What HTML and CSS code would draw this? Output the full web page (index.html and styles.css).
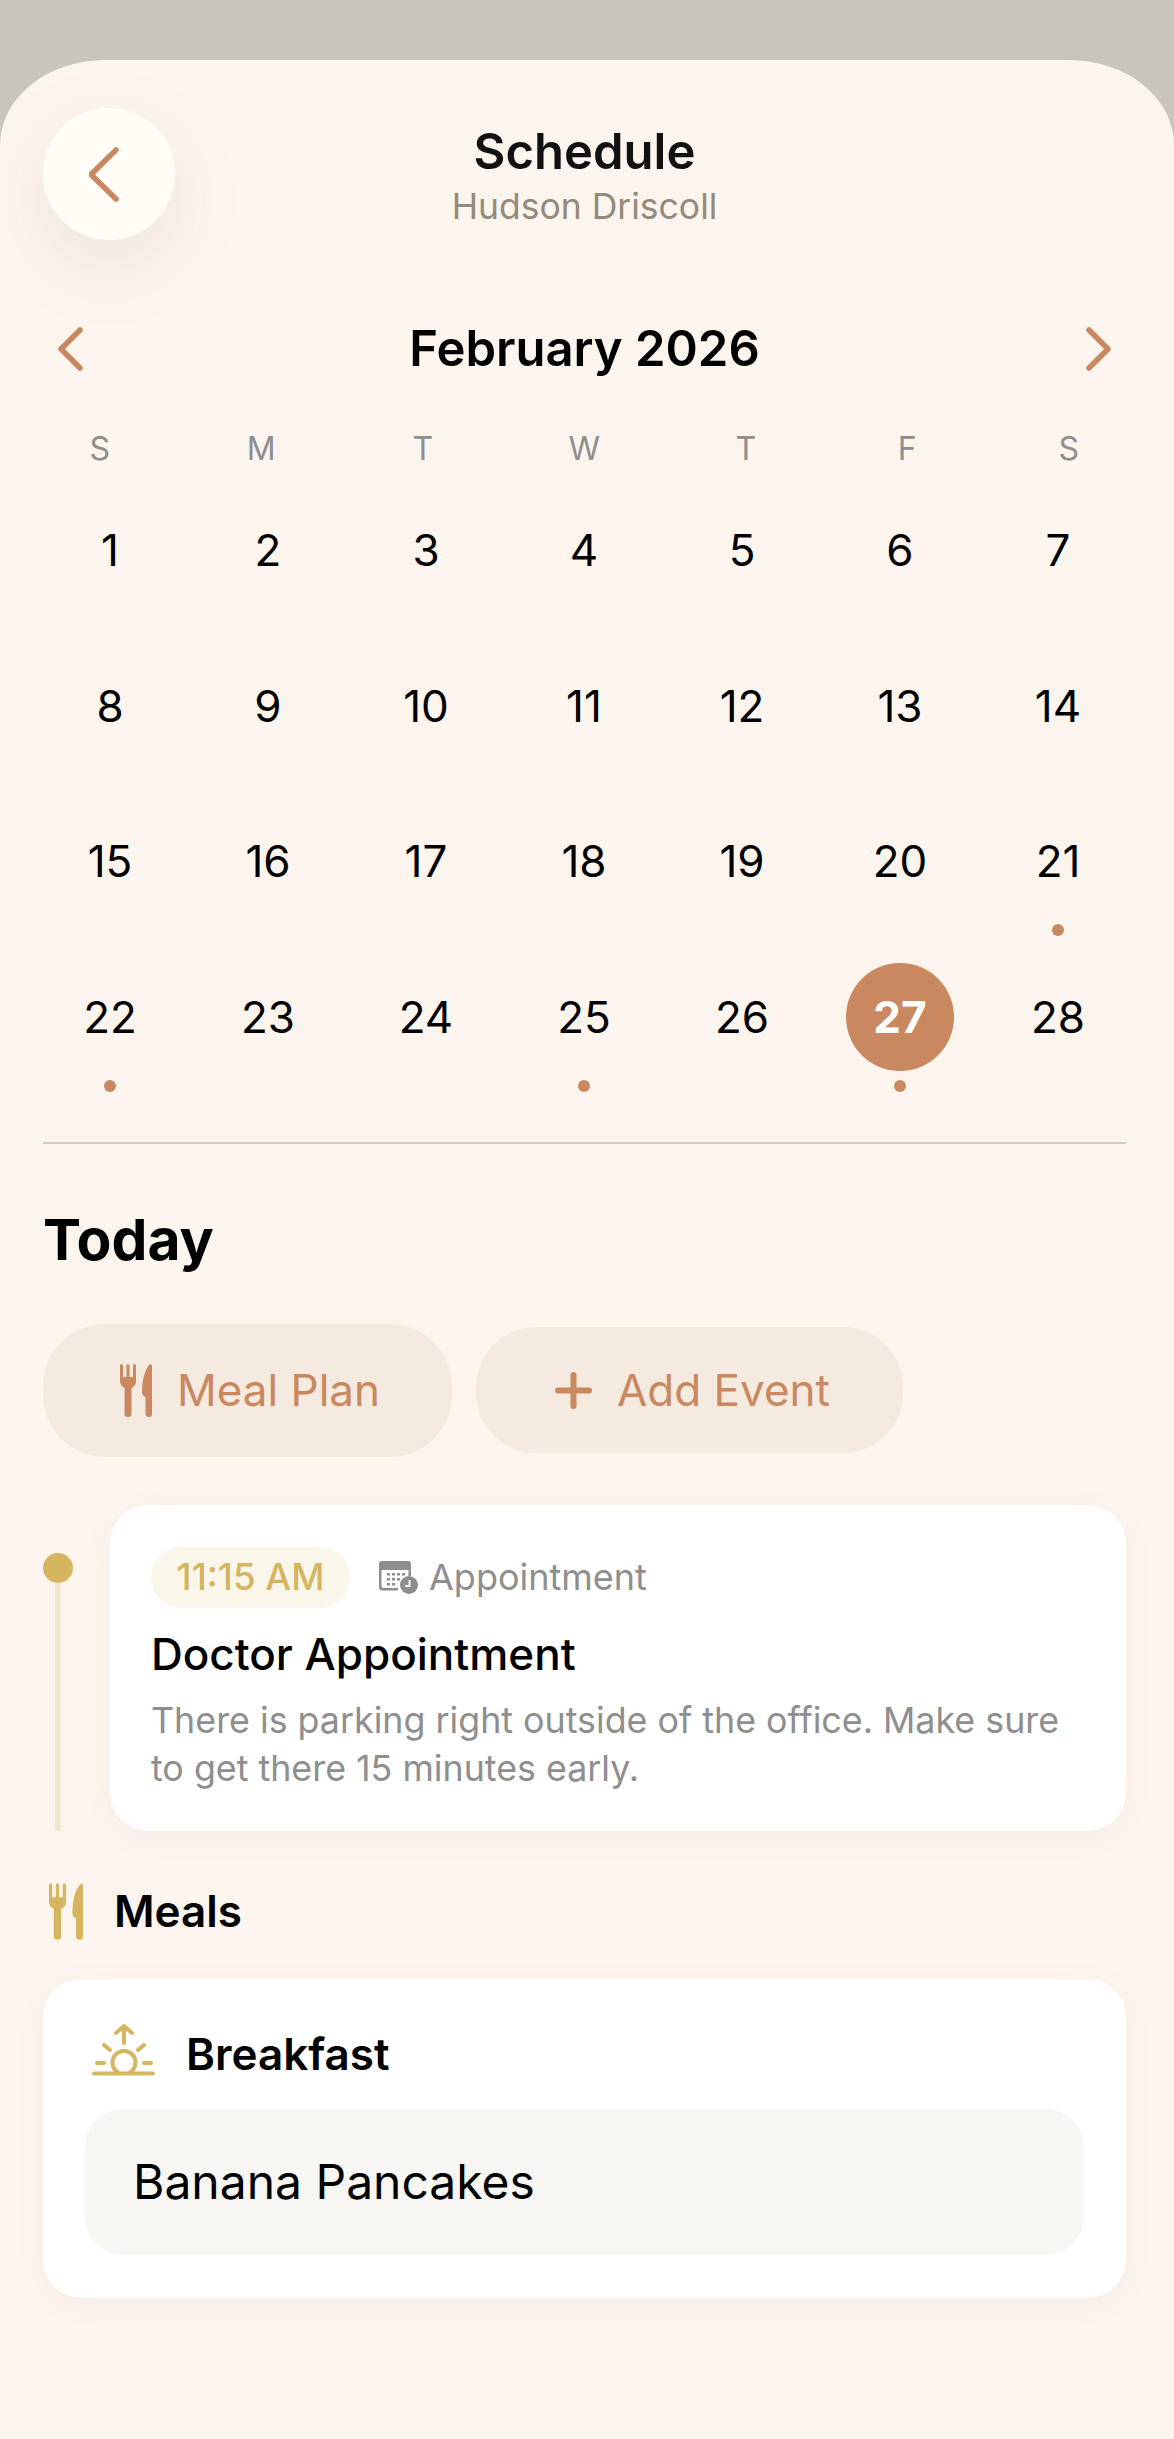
FILE: index.html
```html
<!doctype html>
<html lang="en">
<head>
  <meta charset="UTF-8">
  <meta name="viewport" content="width=device-width, initial-scale=1.0">
  <title>Schedule</title>
  <link rel="stylesheet" href="styles.css">
</head>
<body>
  <div class="sheet">
    <header class="header">
      <button class="back">
        <svg width="35" height="59" viewBox="0 0 35 59"><path d="M27 5 L2 29.500 L27 54" class="chev"/></svg>
      </button>
      <div class="heading">
        <h1>Schedule</h1>
        <p>Hudson Driscoll</p>
      </div>
    </header>

    <div class="month">
      <svg width="28" height="48" viewBox="0 0 28 48"><path d="M24 5 L5 24 L24 43" class="chev"/></svg>
      <h2>February 2026</h2>
      <svg width="28" height="48" viewBox="0 0 28 48"><path d="M4 5 L23 24 L4 43" class="chev"/></svg>
    </div>

    <div class="weekdays">
      <span>S</span><span>M</span><span>T</span><span>W</span><span>T</span><span>F</span><span>S</span>
    </div>

    <div class="days">
      <div class="day"><span class="num">1</span></div>
      <div class="day"><span class="num">2</span></div>
      <div class="day"><span class="num">3</span></div>
      <div class="day"><span class="num">4</span></div>
      <div class="day"><span class="num">5</span></div>
      <div class="day"><span class="num">6</span></div>
      <div class="day"><span class="num">7</span></div>
      <div class="day"><span class="num">8</span></div>
      <div class="day"><span class="num">9</span></div>
      <div class="day"><span class="num">10</span></div>
      <div class="day"><span class="num">11</span></div>
      <div class="day"><span class="num">12</span></div>
      <div class="day"><span class="num">13</span></div>
      <div class="day"><span class="num">14</span></div>
      <div class="day"><span class="num">15</span></div>
      <div class="day"><span class="num">16</span></div>
      <div class="day"><span class="num">17</span></div>
      <div class="day"><span class="num">18</span></div>
      <div class="day"><span class="num">19</span></div>
      <div class="day"><span class="num">20</span></div>
      <div class="day"><span class="num">21</span><i class="dot"></i></div>
      <div class="day"><span class="num">22</span><i class="dot"></i></div>
      <div class="day"><span class="num">23</span></div>
      <div class="day"><span class="num">24</span></div>
      <div class="day"><span class="num">25</span><i class="dot"></i></div>
      <div class="day"><span class="num">26</span></div>
      <div class="day"><span class="num selected">27</span><i class="dot"></i></div>
      <div class="day"><span class="num">28</span></div>
    </div>

    <hr class="divider">

    <h2 class="today">Today</h2>

    <div class="actions">
      <button class="pill pill-meal">
        <svg class="fill-copper" width="32" height="53" viewBox="0 0 32 53"><path d="M0 1.500 Q0 0 1.500 0 Q3 0 3 1.500 V13 H6.500 V1.500 Q6.500 0 8 0 Q9.500 0 9.500 1.500 V13 H13 V1.500 Q13 0 14.500 0 Q16 0 16 1.500 V17 Q16 22 11.500 24 V50 Q11.500 53 8 53 Q4.500 53 4.500 50 V24 Q0 22 0 17 Z"/><path d="M32 1.500 V50 Q32 53 29 53 Q25.500 53 25.500 50 V33 Q22 32 22 28 Q22 10 29 1 Q30.500 -0.500 32 1.500 Z"/></svg>
        Meal Plan
      </button>
      <button class="pill pill-add">
        <svg width="37" height="37" viewBox="0 0 37 37"><path d="M18.500 3 V34 M3 18.500 H34" class="plus"/></svg>
        Add Event
      </button>
    </div>

    <div class="event-row">
      <div class="timeline"><i class="timeline-dot"></i><i class="timeline-line"></i></div>
      <div class="card event">
        <div class="event-meta">
          <span class="time">11:15 AM</span>
          <svg width="39" height="33" viewBox="0 0 39 33">
            <path d="M3 0 H29 Q32 0 32 3 V15 H29.500 V9 H2.500 V25 Q2.500 27 4.500 27 H19 V29.500 H3 Q0 29.500 0 26.500 V3 Q0 0 3 0 Z" fill="#8e8e8e"/>
            <path d="M8 12h3v2.500h-3z M13 12h3v2.500h-3z M18 12h3v2.500h-3z M23 12h3v2.500h-3z M8 17h3v2.500h-3z M13 17h3v2.500h-3z M18 17h3v2.500h-3z M8 22h3v2.500h-3z M13 22h3v2.500h-3z" fill="#8e8e8e"/>
            <circle cx="30" cy="24" r="9" fill="#8e8e8e"/>
            <path d="M30.500 19 V25 H26" fill="none" stroke="#fff" stroke-width="1.800"/>
          </svg>
          <span class="kind">Appointment</span>
        </div>
        <h3>Doctor Appointment</h3>
        <p>There is parking right outside of the office. Make sure to get there 15 minutes early.</p>
      </div>
    </div>

    <div class="meals-head">
      <svg class="fill-gold" width="34" height="57" viewBox="0 0 32 53"><path d="M0 1.500 Q0 0 1.500 0 Q3 0 3 1.500 V13 H6.500 V1.500 Q6.500 0 8 0 Q9.500 0 9.500 1.500 V13 H13 V1.500 Q13 0 14.500 0 Q16 0 16 1.500 V17 Q16 22 11.500 24 V50 Q11.500 53 8 53 Q4.500 53 4.500 50 V24 Q0 22 0 17 Z"/><path d="M32 1.500 V50 Q32 53 29 53 Q25.500 53 25.500 50 V33 Q22 32 22 28 Q22 10 29 1 Q30.500 -0.500 32 1.500 Z"/></svg>
      <h3>Meals</h3>
    </div>

    <div class="card meal">
      <div class="meal-head">
        <svg width="63" height="52" viewBox="0 0 63 52" class="sunrise">
          <path d="M32 2 V19 M24 9 L32 2 L40 9"/>
          <path d="M12 21 L18 26 M52 21 L46 26"/>
          <path d="M5 39 H12 M52 39 H59"/>
          <path d="M25.500 48 A11.500 11.500 0 1 1 38.500 48"/>
          <path d="M2 49.500 H61"/>
        </svg>
        <h3>Breakfast</h3>
      </div>
      <div class="meal-item">Banana Pancakes</div>
    </div>
  </div>
</body></html>
```

FILE: styles.css
```css
* {
  box-sizing: border-box;
}

html, body {
  margin: 0;
  background-color: #c9c5be;
}

body {
  padding-top: 60px;
  color: #000;
  font-family: Inter, "Noto Sans", sans-serif;
}

h1, h2, h3, p {
  margin: 0;
}

button {
  border: none;
  padding: 0;
  font-family: inherit;
}

.sheet {
  min-height: 2379px;
  padding: 48px 48px 0 43px;
  background-color: #fcf5ee;
  border-radius: 105px 105px 0 0 / 85px 85px 0 0;
  overflow: hidden;
}

.chev {
  fill: none;
  stroke: #c9885f;
  stroke-width: 5.500;
  stroke-linecap: round;
  stroke-linejoin: round;
}

/* header */
.header {
  display: grid;
  grid-template-columns: 1fr auto 1fr;
  height: 132px;
}

.back {
  display: flex;
  align-items: center;
  justify-content: center;
  width: 132px;
  height: 132px;
  padding-right: 6px;
  background-color: #fffdf5;
  border-radius: 50%;
  box-shadow: 0 24px 80px rgba(120, 100, 80, 0.1);
}

.heading {
  grid-column: 2;
  padding-top: 15px;
  text-align: center;
}

.heading h1 {
  font-size: 49px;
  line-height: 58px;
  font-weight: 600;
  color: #111;
}

.heading p {
  margin-top: 6px;
  font-size: 35.500px;
  line-height: 40px;
  color: #94897b;
}

/* calendar */
.month {
  display: flex;
  align-items: center;
  justify-content: space-between;
  margin: 84px 0 0;
  padding: 0 13px;
  height: 50px;
}

.month h2 {
  font-size: 49px;
  line-height: 50px;
  font-weight: 600;
}

.weekdays {
  display: grid;
  grid-template-columns: repeat(7, 161.500px);
  margin: 58px 0 0 -24px;
  height: 34px;
  font-size: 32px;
  line-height: 34px;
  text-align: center;
  color: #8e8e8e;
}

.days {
  display: grid;
  grid-template-columns: repeat(7, 158px);
  grid-auto-rows: 155.700px;
  margin: 30px 0 0 -12px;
}

.day {
  display: flex;
  flex-direction: column;
  align-items: center;
  gap: 9px;
}

.num {
  display: flex;
  align-items: center;
  justify-content: center;
  width: 108px;
  height: 108px;
  border-radius: 50%;
  font-size: 44px;
}

.num.selected {
  background-color: #c9885f;
  color: #fff;
  font-weight: 700;
}

.dot {
  width: 12px;
  height: 12px;
  background-color: #c9885f;
  border-radius: 50%;
}

.divider {
  height: 2px;
  margin: 23px 0 0;
  border: none;
  background-color: #cfcbc5;
}

/* today */
.today {
  margin-top: 62px;
  font-size: 57px;
  line-height: 68px;
  font-weight: 700;
}

.actions {
  display: flex;
  align-items: center;
  gap: 24px;
  margin-top: 50px;
}

.pill {
  display: flex;
  align-items: center;
  gap: 25px;
  background-color: #f5eadf;
  color: #c9885f;
  font-size: 44px;
}

.pill-meal {
  width: 409px;
  height: 133px;
  padding-left: 77px;
  border-radius: 62px;
}

.pill-add {
  width: 427px;
  height: 126px;
  padding-left: 79px;
  border-radius: 60px;
}

.plus {
  fill: none;
  stroke: #c9885f;
  stroke-width: 6;
  stroke-linecap: round;
}

.fill-copper {
  fill: #c9885f;
}

.fill-gold {
  fill: #d6b560;
}

/* event */
.event-row {
  display: flex;
  gap: 37px;
  margin-top: 48px;
}

.timeline {
  display: flex;
  flex-direction: column;
  align-items: center;
  width: 30px;
  padding-top: 48px;
}

.timeline-dot {
  flex: none;
  width: 30px;
  height: 30px;
  background-color: #d6b560;
  border-radius: 50%;
}

.timeline-line {
  flex: 1;
  width: 6px;
  background-color: #f3e7cf;
}

.card {
  background-color: #fff;
  border-radius: 38px;
  box-shadow: 0 6px 30px rgba(120, 100, 80, 0.06);
}

.event {
  flex: 1;
  height: 326px;
  padding: 42px 41px 0;
}

.event-meta {
  display: flex;
  align-items: center;
  height: 61px;
}

.time {
  display: flex;
  align-items: center;
  justify-content: center;
  width: 199px;
  height: 61px;
  margin-right: 29px;
  background-color: #faf6ea;
  border-radius: 31px;
  font-size: 36.500px;
  font-weight: 500;
  color: #d6b560;
}

.kind {
  margin-left: 11px;
  font-size: 36px;
  color: #8e8e8e;
}

.event h3 {
  margin-top: 20px;
  font-size: 44px;
  line-height: 52px;
  font-weight: 500;
}

.event p {
  margin-top: 16px;
  font-size: 35.800px;
  line-height: 48px;
  color: #8e8e8e;
}

/* meals */
.meals-head {
  display: flex;
  align-items: center;
  gap: 31px;
  margin: 52px 0 0 6px;
  height: 57px;
}

.meals-head h3,
.meal-head h3 {
  font-size: 44px;
  font-weight: 600;
}

.meal {
  height: 319px;
  margin-top: 39px;
  padding: 45px 42px 0;
}

.meal-head {
  display: flex;
  align-items: center;
  gap: 31px;
  padding-left: 7px;
  height: 52px;
}

.meal-head h3 {
  padding-top: 8px;
}

.sunrise {
  fill: none;
  stroke: #d6b560;
  stroke-width: 4;
  stroke-linecap: round;
  stroke-linejoin: round;
}

.meal-item {
  display: flex;
  align-items: center;
  height: 146px;
  margin-top: 33px;
  padding-left: 48px;
  background-color: #f7f6f2;
  border-radius: 38px;
  font-size: 48px;
}
```
